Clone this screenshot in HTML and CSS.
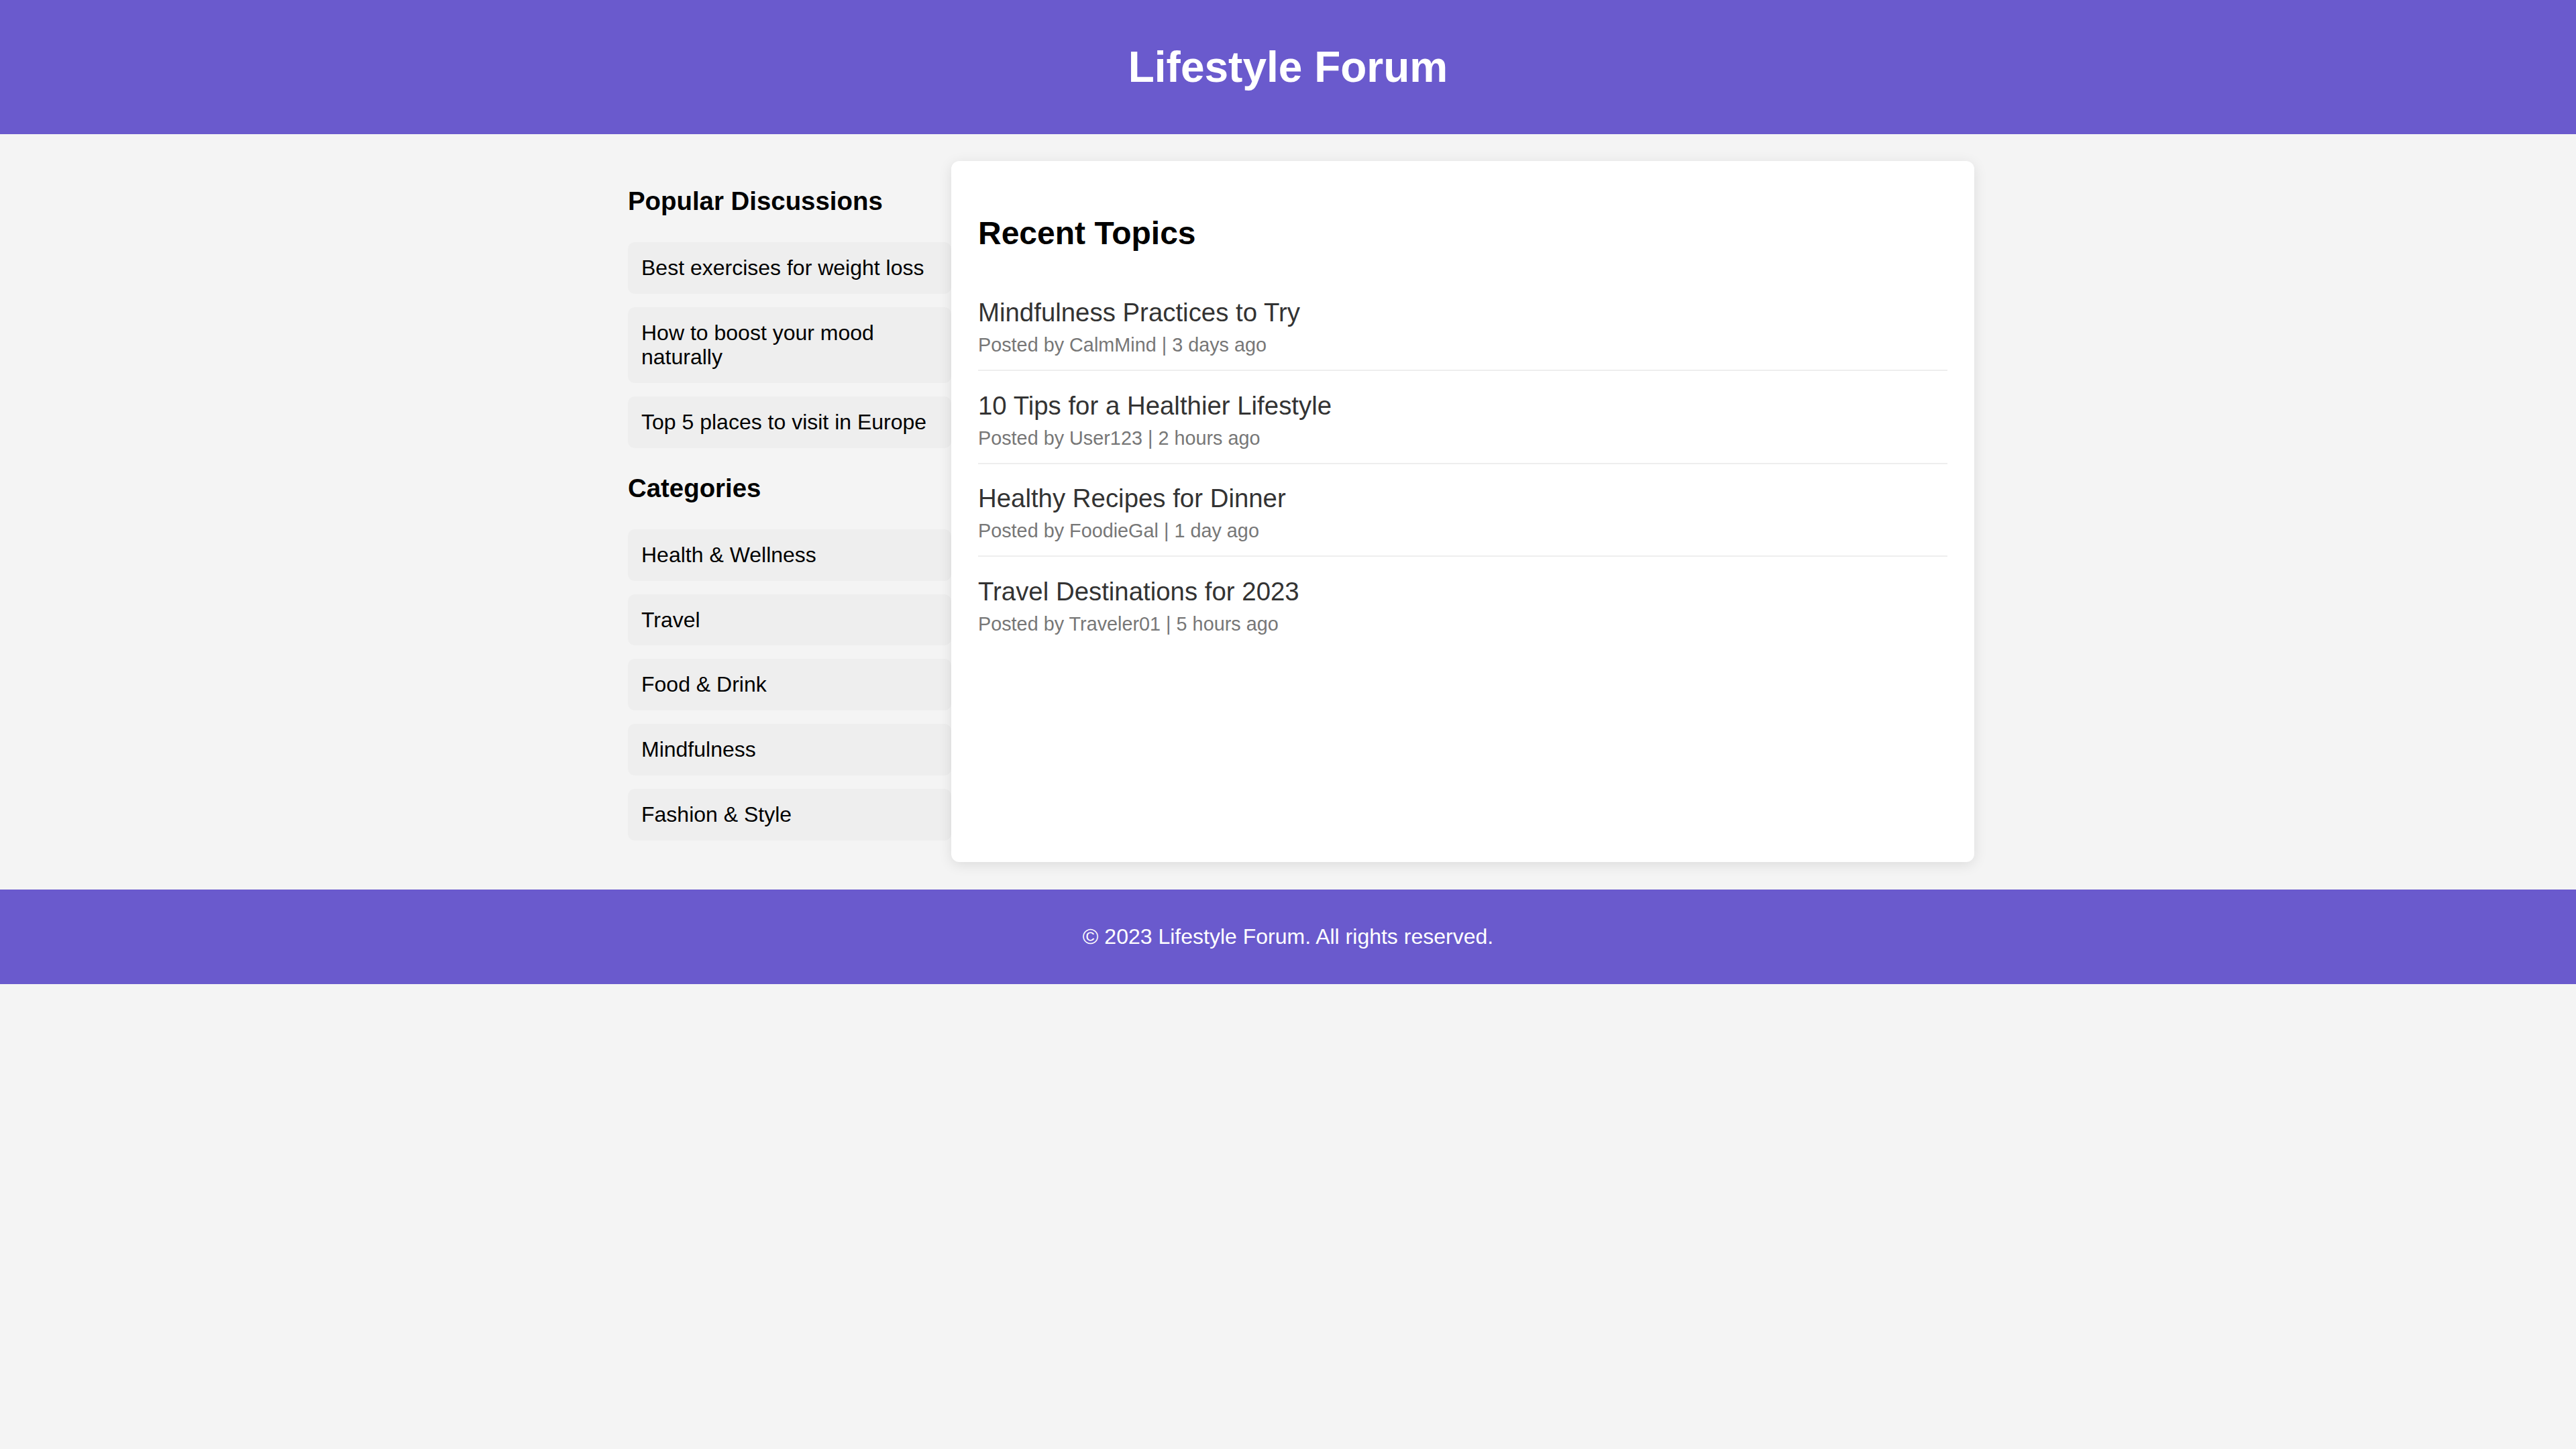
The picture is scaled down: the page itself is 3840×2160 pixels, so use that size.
FILE: index.html
```html
<!DOCTYPE html>
<html lang="en">
<head>
<meta charset="utf-8">
<title>Lifestyle Forum</title>
<link rel="stylesheet" href="styles.css">
</head>
<body>
<header class="site-header">
  <h1 class="site-title">Lifestyle Forum</h1>
</header>
<div class="layout">
  <aside class="sidebar">
    <h3 class="side-heading">Popular Discussions</h3>
    <ul class="side-list">
      <li class="side-item">Best exercises for weight loss</li>
      <li class="side-item">How to boost your mood naturally</li>
      <li class="side-item">Top 5 places to visit in Europe</li>
    </ul>
    <h3 class="side-heading">Categories</h3>
    <ul class="side-list">
      <li class="side-item">Health &amp; Wellness</li>
      <li class="side-item">Travel</li>
      <li class="side-item">Food &amp; Drink</li>
      <li class="side-item">Mindfulness</li>
      <li class="side-item">Fashion &amp; Style</li>
    </ul>
  </aside>
  <main class="card">
    <h2 class="card-title">Recent Topics</h2>
    <div class="topic">
      <h3 class="topic-title">Mindfulness Practices to Try</h3>
      <p class="topic-meta">Posted by CalmMind | 3 days ago</p>
    </div>
    <div class="topic">
      <h3 class="topic-title">10 Tips for a Healthier Lifestyle</h3>
      <p class="topic-meta">Posted by User123 | 2 hours ago</p>
    </div>
    <div class="topic">
      <h3 class="topic-title">Healthy Recipes for Dinner</h3>
      <p class="topic-meta">Posted by FoodieGal | 1 day ago</p>
    </div>
    <div class="topic">
      <h3 class="topic-title">Travel Destinations for 2023</h3>
      <p class="topic-meta">Posted by Traveler01 | 5 hours ago</p>
    </div>
  </main>
</div>
<footer class="site-footer">
  <p class="footer-text">&copy; 2023 Lifestyle Forum. All rights reserved.</p>
</footer>
</body>
</html>
```
FILE: styles.css
```css
* { box-sizing: border-box; }

html, body {
  margin: 0;
  padding: 0;
}

body {
  background: #f4f4f4;
  font-family: "Liberation Sans", Arial, Helvetica, sans-serif;
  color: #000;
}

.site-header {
  background: #6a5acd;
  height: 200px;
  display: flex;
  align-items: center;
  justify-content: center;
}

.site-title {
  margin: 0;
  color: #fff;
  font-size: 64px;
  font-weight: bold;
  line-height: normal;
}

.layout {
  display: flex;
  align-items: stretch;
  width: 2007px;
  margin: 40px 0 41px calc(50% - 984px);
}

.sidebar {
  width: 482px;
  flex: 0 0 482px;
  display: flow-root;
}

.side-heading {
  font-size: 38.4px;
  font-weight: bold;
  margin: 38.4px 0;
  line-height: 44px;
}

.side-list {
  list-style: none;
  margin: 0 0 32px;
  padding: 0;
}

.side-item {
  background: #eeeeee;
  border-radius: 10px;
  padding: 20px;
  margin-bottom: 20px;
  font-size: 32px;
  line-height: 36.8px;
  color: #000;
}

.card {
  flex: 1 1 auto;
  background: #fff;
  border-radius: 12px;
  padding: 40px;
  box-shadow: 0 4px 20px rgba(0, 0, 0, 0.1);
}

.card-title {
  font-size: 48px;
  font-weight: bold;
  margin: 39.8px 0;
  line-height: normal;
}

.topic {
  padding: 29.5px 0 20px;
  border-bottom: 2px solid #eeeeee;
}

.topic:last-child {
  border-bottom: none;
}

.topic-title {
  margin: 0 0 10px;
  font-size: 38.4px;
  font-weight: normal;
  color: #333;
  line-height: normal;
}

.topic-meta {
  margin: 0;
  font-size: 28.8px;
  color: #777;
  line-height: normal;
}

.site-footer {
  background: #6a5acd;
  height: 141px;
  display: flex;
  align-items: center;
  justify-content: center;
}

.footer-text {
  margin: 0;
  color: #fff;
  font-size: 32px;
  line-height: normal;
}
```
